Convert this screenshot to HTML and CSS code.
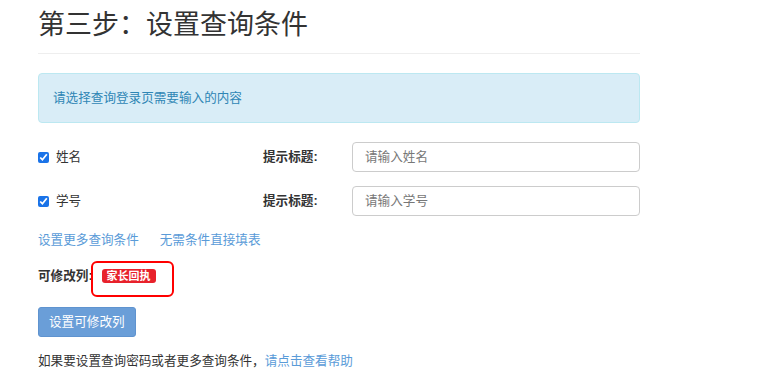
FILE: index.html
```html
<!DOCTYPE html>
<html lang="zh-CN">
<head>
  <meta charset="UTF-8">
  <title>设置查询条件</title>
  <link rel="stylesheet" href="styles.css">
</head>
<body>
  <div class="container">
    <!-- Step title -->
    <h1 class="page-title">第三步：设置查询条件</h1>

    <div class="alert">请选择查询登录页需要输入的内容</div>

    <!-- Query fields -->
    <div class="field-row">
      <label class="check"><input type="checkbox" checked> 姓名</label>
      <span class="field-label">提示标题:</span>
      <input type="text" class="text-input" placeholder="请输入姓名">
    </div>
    <div class="field-row">
      <label class="check"><input type="checkbox" checked> 学号</label>
      <span class="field-label">提示标题:</span>
      <input type="text" class="text-input" placeholder="请输入学号">
    </div>

    <div class="links">
      <a href="#">设置更多查询条件</a>
      <a href="#">无需条件直接填表</a>
    </div>

    <div class="editable">
      <span class="editable-label">可修改列:</span>
      <span class="badge-wrap">
        <span class="badge">家长回执</span>
        <span class="mark-box"></span>
      </span>
    </div>

    <button class="btn" disabled>设置可修改列</button>

    <p class="help">如果要设置查询密码或者更多查询条件，<a href="#">请点击查看帮助</a></p>
  </div>
</body>
</html>
```

FILE: styles.css
```css
body {
  margin: 0;
  font-family: "Liberation Sans", "Noto Sans CJK SC", sans-serif;
  font-size: 12.6px;
  line-height: 18px;
  color: #333;
  background: #fff;
}

a {
  color: #5a9bd8;
  text-decoration: none;
}

.container {
  width: 602px;
  padding-left: 38px;
}

.page-title {
  margin: 10px 0 0;
  padding-bottom: 13px;
  font-size: 27px;
  line-height: 30px;
  font-weight: normal;
  color: #333;
  border-bottom: 1px solid #eee;
}

.alert {
  margin-top: 19px;
  padding: 15px 14px;
  background: #d9edf7;
  border: 1px solid #bce8f1;
  border-radius: 4px;
  color: #2f86b5;
}

.field-row {
  display: grid;
  grid-template-columns: 225px 89px 1fr;
  align-items: center;
  height: 30px;
  margin-top: 14px;
}

.alert + .field-row {
  margin-top: 19px;
}

.check {
  display: flex;
  align-items: center;
}

.check input {
  width: 11px;
  height: 11px;
  margin: 0 7px 0 0;
  accent-color: #1a73e8;
}

.field-label {
  font-weight: bold;
}

.text-input {
  height: 30px;
  box-sizing: border-box;
  border: 1px solid #ccc;
  border-radius: 4px;
  padding: 0 12px;
  font: inherit;
  color: #555;
}

.text-input::placeholder {
  color: #777;
}

.links {
  margin-top: 15px;
  display: flex;
  gap: 21px;
}

.editable {
  margin-top: 18px;
  display: flex;
  align-items: center;
}

.editable-label {
  font-weight: bold;
  margin-right: 9px;
}

.badge-wrap {
  position: relative;
  display: inline-flex;
}

.badge {
  background: #e8212b;
  color: #fff;
  font-weight: bold;
  font-size: 11px;
  line-height: 14px;
  padding: 0 5px;
  border-radius: 3px;
}

.mark-box {
  position: absolute;
  top: -8px;
  left: -11px;
  right: -18px;
  bottom: -14px;
  border: 2px solid #f00;
  border-radius: 6px;
}

.btn {
  display: block;
  margin-top: 22px;
  height: 30px;
  padding: 0 10px;
  background: #6a9ed8;
  border: 1px solid #5f93cf;
  border-radius: 3px;
  color: #fff;
  font: inherit;
}

.help {
  margin: 15px 0 0;
}
```
